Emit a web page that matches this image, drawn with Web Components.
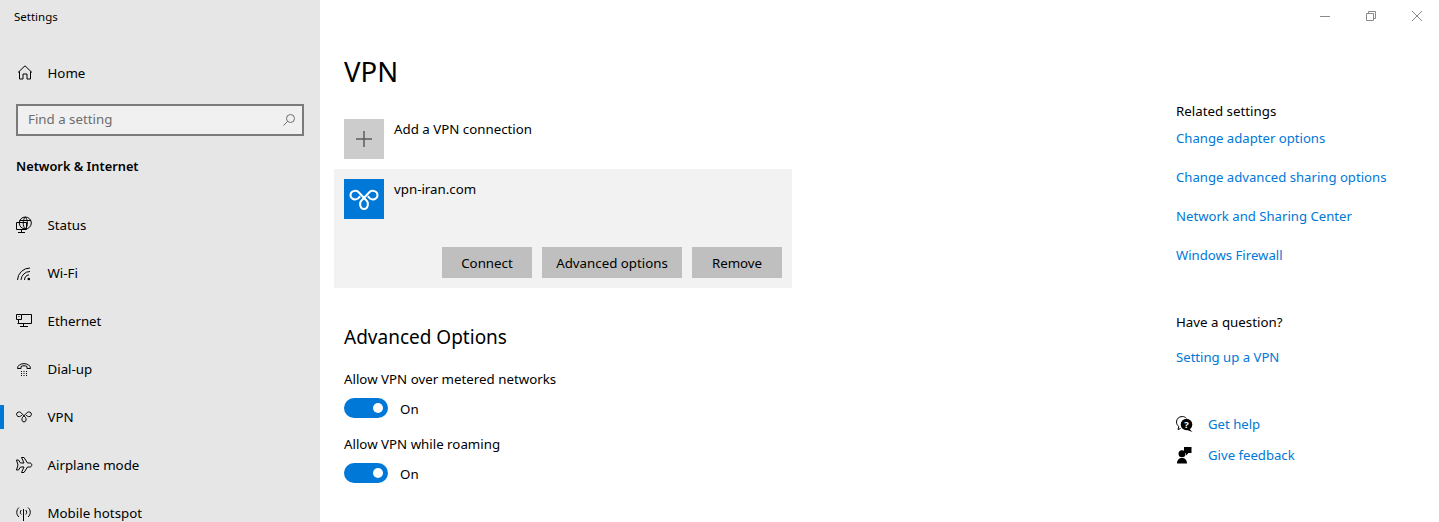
<!DOCTYPE html>
<html>
<head>
<meta charset="utf-8">
<title>Settings</title>
<style>
  html, body { margin: 0; height: 100%; overflow: hidden; }
  body { font: 13.3px/20px "Noto Sans", sans-serif; color: #000; background: #fff; }
</style>
</head>
<body>
<x-settings-app></x-settings-app>
<script>
const VPN_KNOT = 'M14.2 12.8 22.500 21.500C25 24 24 30 20 30S15 24 17.500 21.500L25.800 12.800C28 10.800 33.500 12 33.500 16S29 21.500 26 19.500L23.800 17.300M14.200 12.800C12 10.800 6.500 12 6.500 16S11 21.500 14 19.500L16.200 17.300';

const ICONS = {
  home: '<path d="M2 7.500 9 .8l7 6.700M3.500 6.500V14H7V9h4v5h3.500V6.500"/>',
  status: '<circle cx="9.300" cy="6" r="6"/><path d="M9.300 0c-2.800 3-2.800 9 0 12M9.300 0c2.800 3 2.800 9 0 12M3.500 3.500h11.500M.5 5.500h10v7H.5zM5.500 12.500v3M2 15.500h7"/>',
  wifi: '<path d="M1.500 15A12.500 12.500 0 0 1 14 3M5 15A9 9 0 0 1 14 6.500M8.500 15A5.500 5.500 0 0 1 13 9.800"/><circle cx="12.800" cy="14" r="1.300" fill="currentColor" stroke="none"/>',
  ethernet: '<path d="M5.500 1.500h10v9H1.500M7.500 10.500v3.500M4 13.500h8M.5 1.500h5v5h-5zM2.500 6.500v4M2.500 3.500h1"/>',
  dialup: '<path d="M1.500 7.500C1.500 1 14.500 1 14.500 7.500h-3.500V5.500c-1.500-1-4.500-1-6 0v2z"/><path d="M5 10.500h1M7.500 10.500h1M10 10.500h1M5 12.500h1M7.500 12.500h1M10 12.500h1M5 14.500h1M7.500 14.500h1M10 14.500h1"/>',
  plane: '<path d="M.5 3h2l2 3H8L5.500.5H8L11.500 6H14c1 0 1.800 1 1.800 2s-.8 2-1.800 2h-2.500L8 15.500H5.500L8 10H4.500l-2 3h-2L2 8z"/>',
  hotspot: '<path d="M7.500 4v12M3 2.500c-3 2.500-3 7 0 9.500M12 2.500c3 2.500 3 7 0 9.500M5.300 5c-1.300 1.300-1.300 3.200 0 4.500M9.700 5c1.300 1.300 1.300 3.200 0 4.500"/>',
  help: '<path d="M4.500 14.500 2 15.500l.8-3C1.300 11.300.5 9.800.5 8 .5 4.900 3 2.500 6.200 2.500c1.700 0 3.200.7 4.200 1.800" fill="none"/><circle cx="10.500" cy="10.500" r="5.800" fill="currentColor" stroke="none"/><path d="M13 14.500l3.500 3.500-5.500-2z" fill="currentColor" stroke="none"/><text x="10.500" y="14" text-anchor="middle" font-family="Noto Sans" font-weight="700" font-size="9.500" fill="#fff" stroke="none">?</text>',
  feedback: '<circle cx="6" cy="8.800" r="3.500" fill="currentColor" stroke="none"/><path d="M1 18.500c0-3.500 2-5.500 5-5.500s5 2 5 5.500z" fill="currentColor" stroke="none"/><path d="M8 2h7.500v6h-3l-2.500 2.500V8H8z" fill="currentColor" stroke="none"/>',
};

function icon(name, size = 16) {
  return `<svg width="${size}" height="${size}" viewBox="0 0 ${size} ${size}" fill="none" stroke="currentColor">${ICONS[name]}</svg>`;
}

function knot(size, box, strokeWidth) {
  return `<svg width="${size}" height="${size}" viewBox="${box}" fill="none" stroke="currentColor" stroke-width="${strokeWidth}"><path d="${VPN_KNOT}"/></svg>`;
}

class NavItem extends HTMLElement {
  constructor() {
    super();
    const name = this.getAttribute('icon');
    const art = name === 'vpn' ? knot(16, '5.500 6.500 29 29', 1.8) : icon(name);
    this.attachShadow({ mode: 'open' }).innerHTML = `
      <style>
        :host { display: flex; align-items: center; height: 48px; padding-left: 16px; gap: 15.5px; position: relative; }
        :host([selected])::before { content: ''; position: absolute; left: 0; top: 12px; width: 4px; height: 24px; background: #0078d7; }
        svg { display: block; flex: none; overflow: visible; }
        .slot { display: flex; }
      </style>
      <span class="slot">${art}</span>
      <slot></slot>
    `;
  }
}

class SearchBox extends HTMLElement {
  constructor() {
    super();
    this.attachShadow({ mode: 'open' }).innerHTML = `
      <style>
        :host { display: flex; align-items: center; justify-content: space-between; box-sizing: border-box; height: 32px; margin: 7px 16px 0 16px; padding: 0 7px 2px 10px; border: 2px solid #7a7a7a; background: #f0f0f0; color: #6d6d6d; }
        svg { display: block; margin-top: 2px; }
      </style>
      <slot></slot>
      <svg width="12" height="12" viewBox="0 0 12 12" fill="none" stroke="currentColor"><circle cx="7.500" cy="4.500" r="4"/><path d="M4.700 7.300.5 11.500"/></svg>
    `;
  }
}

class SettingsSidebar extends HTMLElement {
  constructor() {
    super();
    const nav = [['status', 'Status'], ['wifi', 'Wi-Fi'], ['ethernet', 'Ethernet'], ['dialup', 'Dial-up'],
      ['vpn', 'VPN'], ['plane', 'Airplane mode'], ['hotspot', 'Mobile hotspot']];
    this.attachShadow({ mode: 'open' }).innerHTML = `
      <style>
        :host { display: block; flex: none; width: 320px; height: 522px; overflow: hidden; background: #e6e6e6; }
        .title { height: 34px; line-height: 34px; padding-left: 14px; font-size: 11.500px; }
        .home { margin-top: 15px; }
        .section { margin: 15px 0 20px 16px; line-height: 30px; font-size: 12.800px; font-weight: 600; }
      </style>
      <div class="title">Settings</div>
      <x-nav-item class="home" icon="home">Home</x-nav-item>
      <x-search-box>Find a setting</x-search-box>
      <div class="section">Network &amp; Internet</div>
      ${nav.map(([i, t]) => `<x-nav-item icon="${i}"${t === 'VPN' ? ' selected' : ''}>${t}</x-nav-item>`).join('')}
    `;
  }
}

class WindowControls extends HTMLElement {
  constructor() {
    super();
    this.attachShadow({ mode: 'open' }).innerHTML = `
      <style>
        :host { display: flex; justify-content: flex-end; height: 32px; margin-right: -1px; }
        span { display: flex; align-items: center; justify-content: center; width: 46px; }
        svg { display: block; }
      </style>
      <span><svg width="10" height="10" viewBox="0 0 10 10" stroke="#8a8a8a" fill="none"><path d="M0 5.500h10"/></svg></span>
      <span><svg width="10" height="10" viewBox="0 0 10 10" stroke="#8a8a8a" fill="none"><path d="M.5 2.500h7v7h-7zM2.500 2.500v-2h7v7h-2"/></svg></span>
      <span><svg width="10" height="10" viewBox="0 0 10 10" stroke="#8a8a8a" fill="none"><path d="M0 0l10 10M10 0 0 10"/></svg></span>
    `;
  }
}

class ActionButton extends HTMLElement {
  constructor() {
    super();
    this.attachShadow({ mode: 'open' }).innerHTML = `
      <style>
        :host { display: flex; align-items: center; justify-content: center; height: 31px; width: 90px; background: #bfbfbf; }
        :host([wide]) { width: 140px; }
      </style>
      <slot></slot>
    `;
  }
}

class ToggleSwitch extends HTMLElement {
  constructor() {
    super();
    this.attachShadow({ mode: 'open' }).innerHTML = `
      <style>
        :host { display: flex; align-items: center; gap: 12px; height: 20px; }
        .track { display: flex; align-items: center; justify-content: flex-end; box-sizing: border-box; width: 44px; height: 20px; padding-right: 5px; border-radius: 10px; background: #0078d7; }
        .knob { width: 10px; height: 10px; border-radius: 50%; background: #fff; }
        .text { position: relative; top: 1px; }
      </style>
      <div class="track"><div class="knob"></div></div>
      <span class="text"><slot></slot></span>
    `;
  }
}

class VpnPage extends HTMLElement {
  constructor() {
    super();
    this.attachShadow({ mode: 'open' }).innerHTML = `
      <style>
        :host { display: block; padding: 20px 0 0 24px; flex: 1; }
        h1 { margin: 0; font-size: 27.500px; line-height: 40px; font-weight: 400; }
        h2 { margin: 35px 0 0; font-size: 19px; line-height: 28px; font-weight: 400; }
        .row { display: flex; gap: 10px; }
        .add { margin-top: 27px; }
        .tile { display: flex; align-items: center; justify-content: center; width: 40px; height: 40px; flex: none; }
        .plus { background: #cccccc; color: #5c5c5c; }
        .logo { background: #0078d7; color: #fff; }
        .logo svg { display: block; }
        .card { width: 438px; margin: 10px 0 0 -10px; padding: 10px; background: #f2f2f2; }
        .buttons { display: flex; justify-content: flex-end; gap: 10px; margin-top: 28px; }
        .label { margin-top: 18px; }
        .label + x-toggle-switch { margin-top: 9px; }
        .label.next { margin-top: 16px; }
      </style>
      <h1>VPN</h1>
      <div class="row add">
        <div class="tile plus"><svg width="16" height="16" viewBox="0 0 16 16" stroke="currentColor" fill="none" stroke-width="1.500"><path d="M8 0v16M0 8h16"/></svg></div>
        <div>Add a VPN connection</div>
      </div>
      <div class="card">
        <div class="row">
          <div class="tile logo">${knot(40, '0 0 40 40', 2)}</div>
          <div>vpn-iran.com</div>
        </div>
        <div class="buttons">
          <x-action-button>Connect</x-action-button>
          <x-action-button wide>Advanced options</x-action-button>
          <x-action-button>Remove</x-action-button>
        </div>
      </div>
      <h2>Advanced Options</h2>
      <div class="label">Allow VPN over metered networks</div>
      <x-toggle-switch>On</x-toggle-switch>
      <div class="label next">Allow VPN while roaming</div>
      <x-toggle-switch>On</x-toggle-switch>
    `;
  }
}

class RelatedPane extends HTMLElement {
  constructor() {
    super();
    this.attachShadow({ mode: 'open' }).innerHTML = `
      <style>
        :host { display: block; flex: none; width: 263px; padding-top: 69px; }
        a { display: block; color: #0078d7; text-decoration: none; font-size: 13.150px; }
        .first { margin-top: 7px; }
        .links { display: flex; flex-direction: column; gap: 19px; }
        .question { margin-top: 47px; }
        .setup { margin-top: 15px; }
        .help { display: flex; flex-direction: column; gap: 11px; margin-top: 47px; }
        .help a { display: flex; align-items: center; gap: 12px; }
        svg { display: block; color: #000; }
      </style>
      <div>Related settings</div>
      <div class="links first">
        <a>Change adapter options</a>
        <a>Change advanced sharing options</a>
        <a>Network and Sharing Center</a>
        <a>Windows Firewall</a>
      </div>
      <div class="question">Have a question?</div>
      <a class="setup">Setting up a VPN</a>
      <div class="help">
        <a>${icon('help', 20)}Get help</a>
        <a>${icon('feedback', 20)}Give feedback</a>
      </div>
    `;
  }
}

class SettingsApp extends HTMLElement {
  constructor() {
    super();
    this.attachShadow({ mode: 'open' }).innerHTML = `
      <style>
        :host { display: flex; width: 1439px; height: 522px; overflow: hidden; }
        .content { flex: 1; display: flex; flex-direction: column; }
        .columns { display: flex; }
      </style>
      <x-settings-sidebar></x-settings-sidebar>
      <div class="content">
        <x-window-controls></x-window-controls>
        <div class="columns">
          <x-vpn-page></x-vpn-page>
          <x-related-pane></x-related-pane>
        </div>
      </div>
    `;
  }
}

[
  ['x-nav-item', NavItem],
  ['x-search-box', SearchBox],
  ['x-settings-sidebar', SettingsSidebar],
  ['x-window-controls', WindowControls],
  ['x-action-button', ActionButton],
  ['x-toggle-switch', ToggleSwitch],
  ['x-vpn-page', VpnPage],
  ['x-related-pane', RelatedPane],
  ['x-settings-app', SettingsApp],
].forEach(([name, cls]) => customElements.define(name, cls));
</script>
</body>
</html>
